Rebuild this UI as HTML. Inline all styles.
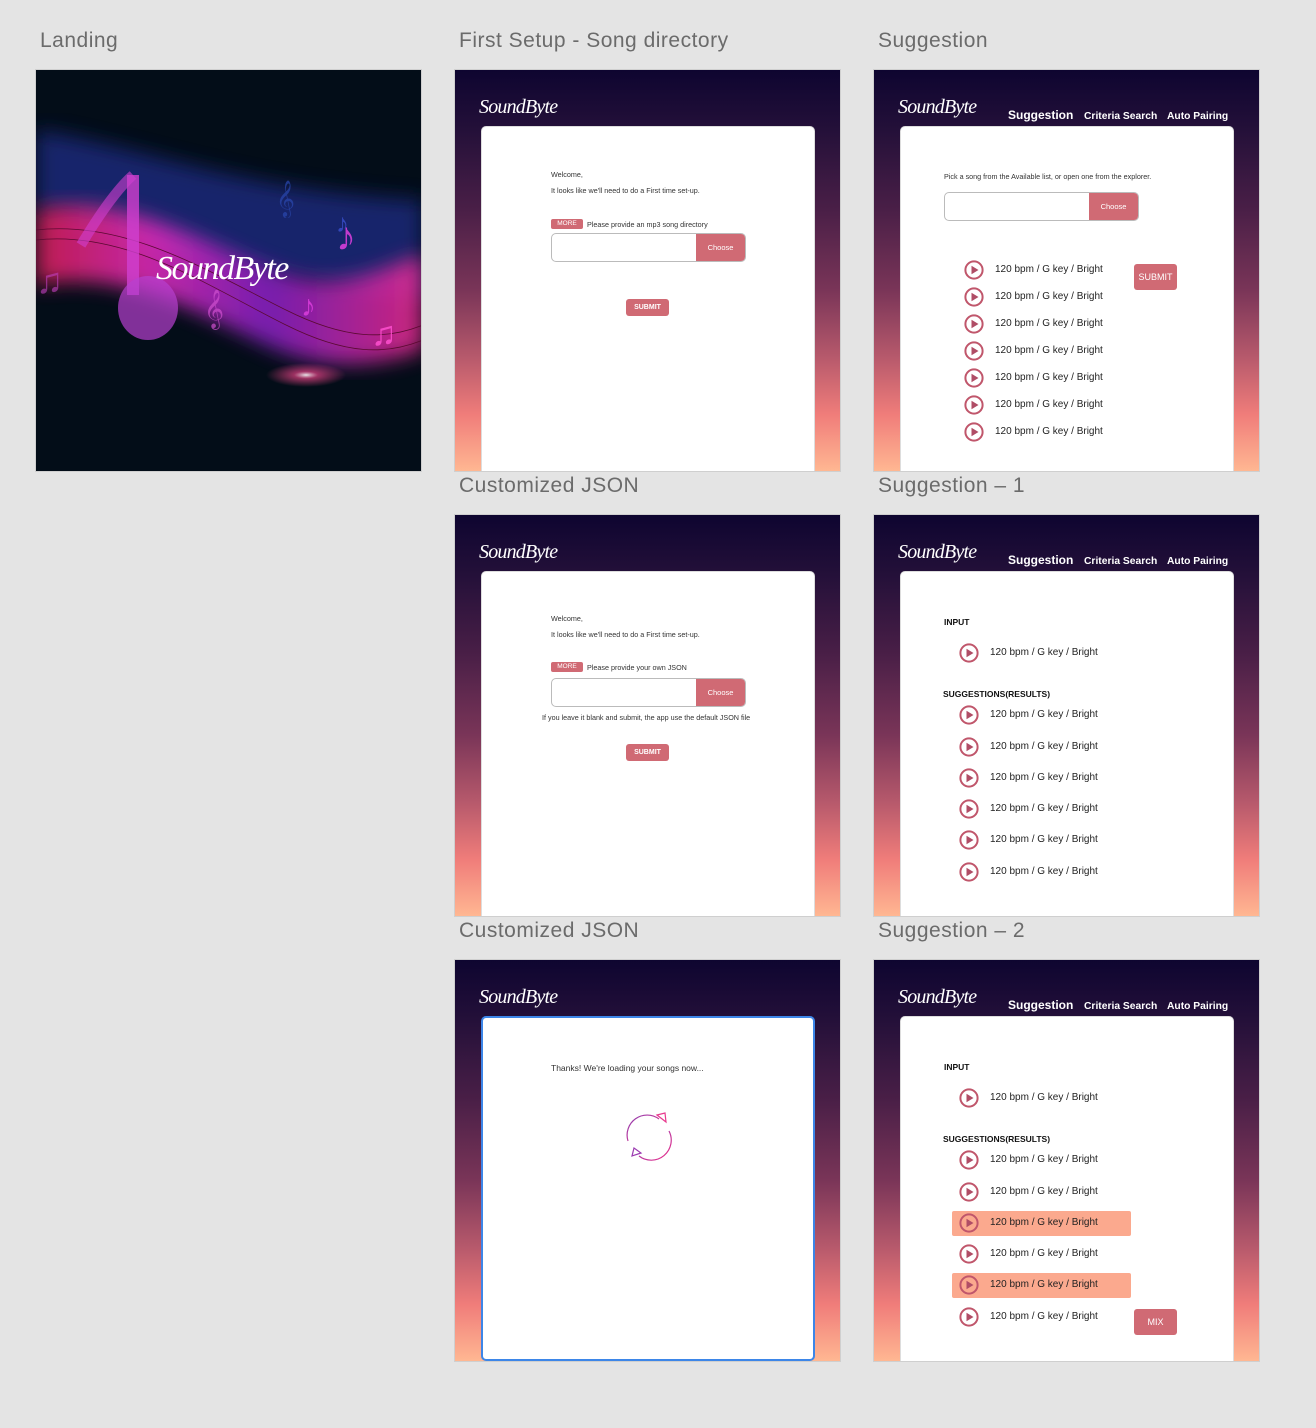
<!DOCTYPE html>
<html><head><meta charset="utf-8"><style>
*{margin:0;padding:0;box-sizing:border-box}
body{width:1316px;height:1428px;background:#e4e4e4;position:relative;overflow:hidden;font-family:"Liberation Sans",sans-serif}
.lbl{position:absolute;font-size:21px;color:#6b6b6b;letter-spacing:.5px}
.fr{position:absolute;width:387px;height:403px;border:1px solid #cfcfcf;overflow:hidden;background:linear-gradient(180deg,#0e0530 0%,#241039 15%,#4a1f47 35%,#7a3558 55%,#b85a6c 72%,#f07d7a 86%,#ffb792 100%)}
.logo{position:absolute;left:24px;top:26px;color:#fff;font-family:"Liberation Serif",serif;font-style:italic;font-size:20px;letter-spacing:-.8px}
.card{position:absolute;left:26px;top:56px;width:334px;height:360px;background:#fff;border-radius:5px;border:1px solid #ddd}
.t{position:absolute;font-size:7.2px;color:#333;white-space:nowrap}
.more{position:absolute;width:32px;height:10px;background:#d06a74;color:#fff;font-size:6.5px;text-align:center;line-height:10px;border-radius:2px}
.inp{position:absolute;width:195px;height:29px;border:1px solid #bbb;border-radius:5px;overflow:hidden;background:#fff}
.inp b{position:absolute;right:0;top:0;width:49px;height:100%;background:#d06a74;color:#fff;font-weight:normal;font-size:7.5px;text-align:center;line-height:28px}
.btn{position:absolute;background:#d06a74;color:#fff;text-align:center;border-radius:3px}
.nav{position:absolute;top:38px;color:#fff;font-weight:bold;white-space:nowrap}
.row{position:absolute;height:25px;width:180px}
.row svg{position:absolute;left:0;top:2px}
.row span{position:absolute;left:31px;top:6px;font-size:10px;color:#222;white-space:nowrap}
.hlb{position:absolute;width:179px;height:25px;background:#fba98e;border-radius:2px}
.h{position:absolute;font-size:8.5px;font-weight:bold;color:#111}
</style></head><body>

<div class="lbl" style="left:40px;top:29px">Landing</div>
<div class="lbl" style="left:459px;top:29px">First Setup - Song directory</div>
<div class="lbl" style="left:878px;top:29px">Suggestion</div>
<div class="lbl" style="left:459px;top:474px">Customized JSON</div>
<div class="lbl" style="left:878px;top:474px">Suggestion – 1</div>
<div class="lbl" style="left:459px;top:919px">Customized JSON</div>
<div class="lbl" style="left:878px;top:919px">Suggestion – 2</div>

<!-- Landing -->
<div style="position:absolute;left:35px;top:69px;width:387px;height:403px;border:1px solid #cfcfcf;overflow:hidden;background:#030d18">
<svg width="387" height="403" viewBox="0 0 387 403">
<defs>
<linearGradient id="wv" x1="0" y1="0" x2="1" y2="0"><stop offset="0" stop-color="#e0205a"/><stop offset=".3" stop-color="#e62cc0"/><stop offset=".6" stop-color="#8a22c8"/><stop offset="1" stop-color="#f02a90"/></linearGradient>
<radialGradient id="gl" cx=".5" cy=".5" r=".5"><stop offset="0" stop-color="#fff" stop-opacity=".9"/><stop offset=".3" stop-color="#ff4a90" stop-opacity=".6"/><stop offset="1" stop-color="#ff4a90" stop-opacity="0"/></radialGradient>
<filter id="bl"><feGaussianBlur stdDeviation="10"/></filter>
</defs>
<path d="M0 60 C120 80 200 120 387 130 L387 230 C260 220 150 180 0 140Z" fill="#1c2a80" opacity=".8" filter="url(#bl)"/>
<path d="M0 140 C80 120 160 170 240 200 C300 225 340 200 387 185 L387 280 C330 300 280 300 220 270 C150 235 80 200 0 215Z" fill="url(#wv)" opacity=".85" filter="url(#bl)"/>
<path d="M0 160 C90 150 170 200 250 240 C310 270 350 270 387 255" stroke="#5a0a30" fill="none" stroke-width=".8"/>
<path d="M0 170 C90 160 170 215 250 255 C310 285 350 285 387 270" stroke="#5a0a30" fill="none" stroke-width=".8"/>
<ellipse cx="270" cy="305" rx="40" ry="12" fill="url(#gl)"/>
<path d="M97 105 L97 225" stroke="#d040d0" stroke-width="12" opacity=".8"/>
<ellipse cx="112" cy="238" rx="30" ry="32" fill="#b840d0" opacity=".7"/>
<path d="M97 105 C80 120 60 150 45 175" stroke="#d040d0" stroke-width="10" fill="none" opacity=".6"/>
</svg>
<div style="position:absolute;left:300px;top:145px;font-size:40px;color:#e040e0;opacity:.85">♪</div>
<div style="position:absolute;left:335px;top:245px;font-size:34px;color:#ff50d0;opacity:.85">♫</div>
<div style="position:absolute;left:265px;top:220px;font-size:30px;color:#e040e0;opacity:.8">♪</div>
<div style="position:absolute;left:300px;top:138px;font-size:26px;color:#3a50d0;opacity:.8">♪</div>
<div style="position:absolute;left:168px;top:220px;font-size:34px;color:#d050d0;opacity:.7">𝄞</div>
<div style="position:absolute;left:240px;top:110px;font-size:32px;color:#2a48b0;opacity:.7">𝄞</div>
<div style="position:absolute;left:0;top:190px;font-size:36px;color:#c040c0;opacity:.6">♫</div>
<div style="position:absolute;left:120px;top:180px;color:#fff;font-family:'Liberation Serif',serif;font-style:italic;font-size:34px;letter-spacing:-1.5px">SoundByte</div>
</div>

<!-- First setup -->
<div class="fr" style="left:454px;top:69px">
<div class="logo">SoundByte</div>
<div class="card">
<div class="t" style="left:69px;top:43px">Welcome,</div>
<div class="t" style="left:69px;top:59px">It looks like we'll need to do a First time set-up.</div>
<div class="more" style="left:69px;top:92px">MORE</div>
<div class="t" style="left:105px;top:93px">Please provide an mp3 song directory</div>
<div class="inp" style="left:69px;top:106px"><b>Choose</b></div>
<div class="btn" style="left:144px;top:172px;width:43px;height:17px;font-size:7px;font-weight:bold;line-height:17px">SUBMIT</div>
</div></div>

<!-- Suggestion -->
<div class="fr" style="left:873px;top:69px">
<div class="logo">SoundByte</div>
<div class="nav" style="left:134px;font-size:12px">Suggestion</div>
<div class="nav" style="left:210px;font-size:10.3px;top:41px">Criteria Search</div>
<div class="nav" style="left:293px;font-size:10.3px;top:41px">Auto Pairing</div>
<div class="card">
<div class="t" style="left:43px;top:45px">Pick a song from the Available list, or open one from the explorer.</div>
<div class="inp" style="left:43px;top:65px"><b>Choose</b></div>
<div class="btn" style="left:233px;top:137px;width:43px;height:26px;font-size:9px;line-height:26px">SUBMIT</div>
</div>
<div id="s0"></div>
</div>

<!-- Customized JSON -->
<div class="fr" style="left:454px;top:514px">
<div class="logo">SoundByte</div>
<div class="card">
<div class="t" style="left:69px;top:42px">Welcome,</div>
<div class="t" style="left:69px;top:58px">It looks like we'll need to do a First time set-up.</div>
<div class="more" style="left:69px;top:90px">MORE</div>
<div class="t" style="left:105px;top:91px">Please provide your own JSON</div>
<div class="inp" style="left:69px;top:106px"><b>Choose</b></div>
<div class="t" style="left:60px;top:141px">If you leave it blank and submit, the app use the default JSON file</div>
<div class="btn" style="left:144px;top:172px;width:43px;height:17px;font-size:7px;font-weight:bold;line-height:17px">SUBMIT</div>
</div></div>

<!-- Loading -->
<div class="fr" style="left:454px;top:959px">
<div class="logo">SoundByte</div>
<div class="card" style="border:2px solid #3d86e8;height:345px">
<div class="t" style="left:68px;top:45px;font-size:8.5px">Thanks! We're loading your songs now...</div>
<svg style="position:absolute;left:139px;top:92px" width="54" height="54" viewBox="0 0 54 54">
<defs><linearGradient id="sp" x1="0" y1="0" x2="1" y2="1"><stop offset="0" stop-color="#8b3fb0"/><stop offset="1" stop-color="#ee2f8a"/></linearGradient></defs>
<path d="M6 31 A20 20 0 0 1 37 9" stroke="url(#sp)" fill="none" stroke-width="1.2"/>
<path d="M47 21 A20 20 0 0 1 17 46" stroke="url(#sp)" fill="none" stroke-width="1.2"/>
<path d="M35 5 L43 3 L44 12 Z" stroke="#e83a8e" fill="#fff" stroke-width="1.2"/>
<path d="M19 43 L10 46 L12 38 Z" stroke="#9a3ab0" fill="#fff" stroke-width="1.2"/>
</svg>
</div></div>

<!-- Suggestion 1 -->
<div class="fr" style="left:873px;top:514px">
<div class="logo">SoundByte</div>
<div class="nav" style="left:134px;font-size:12px">Suggestion</div>
<div class="nav" style="left:210px;font-size:10.3px;top:41px">Criteria Search</div>
<div class="nav" style="left:293px;font-size:10.3px;top:41px">Auto Pairing</div>
<div class="card">
<div class="h" style="left:43px;top:45px">INPUT</div>
<div class="h" style="left:42px;top:117px">SUGGESTIONS(RESULTS)</div>
</div>
<div id="s1"></div>
</div>

<!-- Suggestion 2 -->
<div class="fr" style="left:873px;top:959px">
<div class="logo">SoundByte</div>
<div class="nav" style="left:134px;font-size:12px">Suggestion</div>
<div class="nav" style="left:210px;font-size:10.3px;top:41px">Criteria Search</div>
<div class="nav" style="left:293px;font-size:10.3px;top:41px">Auto Pairing</div>
<div class="card">
<div class="h" style="left:43px;top:45px">INPUT</div>
<div class="h" style="left:42px;top:117px">SUGGESTIONS(RESULTS)</div>
<div class="btn" style="left:233px;top:292px;width:43px;height:26px;font-size:9px;line-height:26px">MIX</div>
</div>
<div id="s2"></div>
</div>

<script>
var P='<svg width="20" height="20" viewBox="0 0 20 20"><circle cx="10" cy="10" r="8.6" fill="none" stroke="#c0566b" stroke-width="2"/><path d="M7.5 5.8 L14.5 10 L7.5 14.2Z" fill="#b04d66"/></svg>';
function row(x,y){return '<div class="row" style="left:'+x+'px;top:'+y+'px">'+P+'<span>120 bpm / G key / Bright</span></div>';}
var s='';[0,1,2,3,4,5,6].forEach(function(i){s+=row(90,188+i*27)});
document.getElementById('s0').outerHTML=s;
function sugg(hls){var s=row(85,126);[188,220,251,282,313,345].forEach(function(y,i){if(hls.indexOf(i)>=0)s+='<div class="hlb" style="left:78px;top:'+y+'px"></div>';s+=row(85,y)});return s;}
document.getElementById('s1').outerHTML=sugg([]);
document.getElementById('s2').outerHTML=sugg([2,4]);
</script>
</body></html>
